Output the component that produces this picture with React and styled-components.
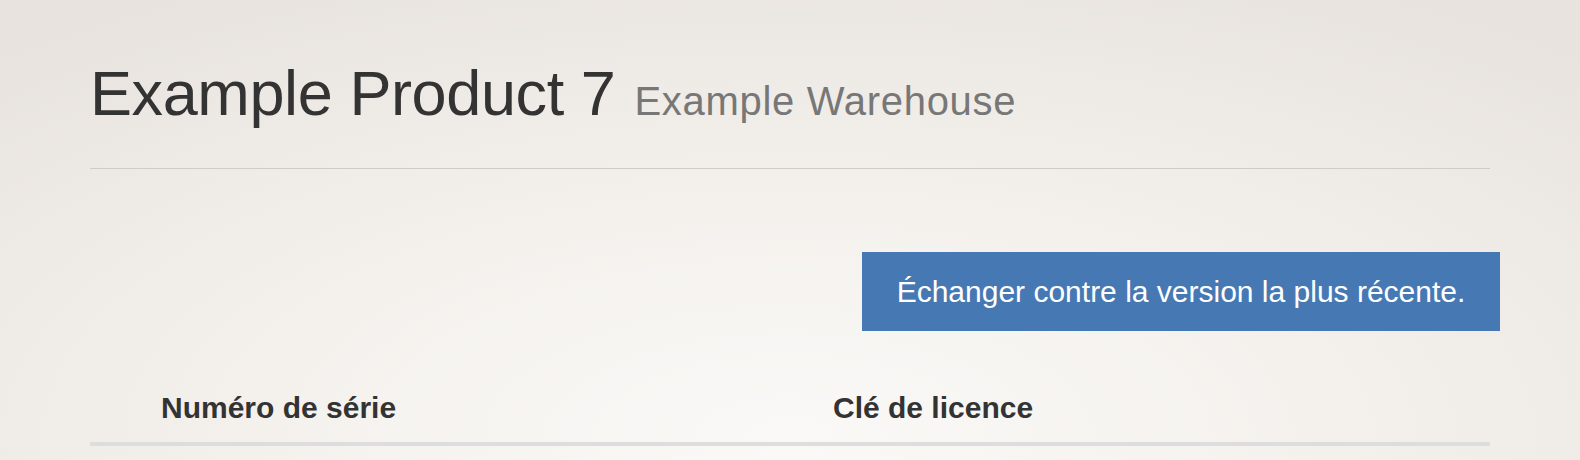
import styled, { createGlobalStyle } from "styled-components"

const GlobalStyle = createGlobalStyle`
    html, body {
        margin: 0;
        padding: 0;
    }

    body {
        width: 1580px;
        height: 460px;
        overflow: hidden;
        font-family: "Liberation Sans", Arial, sans-serif;
        background: radial-gradient(ellipse 75% 110% at 50% 95%, #faf9f7 0%, #f4f1ed 45%, #e8e3de 100%);
    }
`

const App = () => {
    return (
        <>
            <GlobalStyle />
            <Page>

                <Title>
                    Example Product 7
                    <Sub>Example Warehouse</Sub>
                </Title>

                <Divider />

                <Actions>
                    <SwapButton type="button">Échanger contre la version la plus récente.</SwapButton>
                </Actions>

                <HeadRow>
                    <HeadCell />
                    <HeadCell>Numéro de série</HeadCell>
                    <HeadCell>Clé de licence</HeadCell>
                </HeadRow>

            </Page>
        </>
    );
};
export default App;

const Page = styled.div`

    width: 1400px;
    box-sizing: border-box;
    margin-left: 90px;
    padding-top: 62px;

`

const Title = styled.h1`

    margin: 0;
    height: 63px;
    font-size: 63px;
    line-height: 63px;
    letter-spacing: -0.4px;
    font-weight: 400;
    color: #333333;
    white-space: nowrap;

`

const Sub = styled.small`

    margin-left: 19px;
    font-size: 40px;
    line-height: 1;
    letter-spacing: 0.7px;
    font-weight: 400;
    color: #777777;

`

const Divider = styled.hr`

    margin: 43px 0 0 0;
    border: 0;
    height: 1px;
    background-color: #cccccc;

`

const Actions = styled.div`

    display: flex;
    justify-content: flex-end;
    margin-top: 83px;
    margin-right: -10px;

`

const SwapButton = styled.button`

    width: 638px;
    height: 79px;
    padding: 0 30px;
    border: 0;
    background-color: #4679b4;
    color: #ffffff;
    font-family: "Liberation Sans", Arial, sans-serif;
    font-size: 30px;
    cursor: pointer;

`

const HeadRow = styled.div`

    display: grid;
    grid-template-columns: 71px 672px 1fr;
    margin-top: 62px;
    border-bottom: 4px solid #dddddd;

`

const HeadCell = styled.div`

    padding-bottom: 19px;
    font-size: 30px;
    line-height: 30px;
    font-weight: 700;
    color: #333333;

`
